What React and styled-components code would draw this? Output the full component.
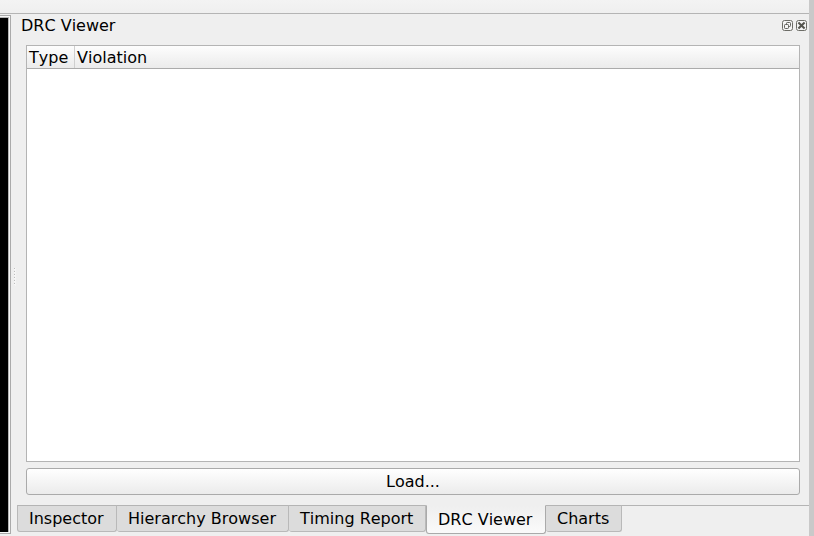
import React from "react";
import styled, { createGlobalStyle } from "styled-components";

const GlobalStyle = createGlobalStyle`
  * { box-sizing: border-box; }
  body { margin: 0; background: #efefef; overflow: hidden; }
`;

const Window = styled.div`
  display: grid;
  grid-template-columns: 809px 5px;
  width: 814px;
  height: 536px;
  background: #efefef;
  color: #000;
  font: 16px/20px "DejaVu Sans", sans-serif;
  font-kerning: none;
  white-space: nowrap;
`;

const Main = styled.div`
  display: flex;
  flex-direction: column;
  min-width: 0;
`;

const WindowEdge = styled.div`
  background: #c9c9c9;
`;

const Toolbar = styled.div`
  flex: none;
  height: 14px;
  background: linear-gradient(#f3f3f3, #efefef);
  border-bottom: 1px solid #b4b4b4;
`;

const Workspace = styled.div`
  display: flex;
  flex: 1;
  min-height: 0;
`;

const CanvasFrame = styled.div`
  flex: none;
  width: 11px;
  height: 519px;
  margin-top: 1px;
  padding: 1px 1px 1px 0;
  background: #f7f7f7;
  border: 1px solid #aaaaaa;
  border-left: 0;
`;

const Canvas = styled.div`
  height: 100%;
  background: #000;
  border: 1px solid #b4b4b4;
  border-width: 1px 1px 0 0;
`;

const Splitter = styled.div`
  flex: none;
  width: 6px;
  padding: 254px 0 0 3px;
`;

const Grip = styled.div`
  width: 2px;
  height: 18px;
  background: repeating-linear-gradient(#bdbdbd 0 1px, #f8f8f8 1px 2px, #efefef 2px 3px);
  border-right: 1px solid #f5f5f5;
`;

const Dock = styled.div`
  display: flex;
  flex-direction: column;
  flex: 1;
  min-width: 0;
`;

const TitleBar = styled.div`
  display: flex;
  align-items: center;
  height: 23px;
  padding: 0 2px 0 4px;
`;

const Title = styled.div`
  flex: 1;
`;

const TitleButtons = styled.div`
  display: flex;
  gap: 3px;
`;

const TitleIcon = styled.svg`
  display: block;
  width: 11px;
  height: 11px;
`;

const Table = styled.div`
  height: 417px;
  margin: 8px 9px 0;
  background: #fff;
  border: 1px solid #b4b4b4;
`;

const HeaderRow = styled.div`
  display: flex;
  height: 23px;
  background: linear-gradient(#fdfdfd, #ebebeb);
  border-bottom: 1px solid #ababab;
`;

const HeaderCell = styled.div`
  width: ${({ $width }) => $width || "auto"};
  padding: 2px 2px 0;
  border-right: ${({ $divided }) => ($divided ? "1px solid #cfcfcf" : "0")};
`;

const LoadButton = styled.button`
  height: 27px;
  margin: 6px 9px 0;
  padding: 0;
  color: inherit;
  font: inherit;
  font-kerning: none;
  background: linear-gradient(#ffffff, #ebebeb);
  border: 1px solid #aaaaaa;
  border-radius: 3px;
`;

const TabBar = styled.div`
  display: flex;
  align-items: flex-start;
  height: 31px;
  margin-top: 10px;
  background: linear-gradient(#b4b4b4, #b4b4b4) 0 0 / 100% 1px no-repeat;
`;

const Tab = styled.div`
  width: ${({ $width }) => $width}px;
  height: ${({ $selected }) => ($selected ? 29 : 27)}px;
  padding: ${({ $selected }) => ($selected ? 4 : 3)}px 0 0 11px;
  background: ${({ $selected }) =>
    $selected ? "linear-gradient(#efefef, #fafafa)" : "#dcdcdc"};
  border: 1px solid ${({ $selected }) => ($selected ? "#aaaaaa" : "#b9b9b9")};
  border-top-color: ${({ $selected }) => ($selected ? "#efefef" : "#b4b4b4")};
  border-left-width: ${({ $joined }) => ($joined ? 0 : 1)}px;
  border-radius: 0 0 3px 3px;
`;

const tabs = [
  { label: "Inspector", width: 100 },
  { label: "Hierarchy Browser", width: 172, joined: true },
  { label: "Timing Report", width: 137, joined: true },
  { label: "DRC Viewer", width: 120, selected: true },
  { label: "Charts", width: 76, joined: true },
];

const iconFrame = (
  <rect x=".5" y=".5" width="10" height="10" rx="2" fill="#f5f5f5" stroke="#6c6c66" />
);

export default function App() {
  return (
    <>
      <GlobalStyle />
      <Window>
        <Main>
          <Toolbar />
          <Workspace>
            <CanvasFrame>
              <Canvas />
            </CanvasFrame>
            <Splitter>
              <Grip />
            </Splitter>
            <Dock>
              <TitleBar>
                <Title>DRC Viewer</Title>
                <TitleButtons>
                  <TitleIcon viewBox="0 0 11 11" aria-label="Float">
                    {iconFrame}
                    <rect x="4.5" y="2.5" width="4" height="4" rx=".8" fill="none" stroke="#62625c" />
                    <rect x="2.5" y="4.5" width="4" height="4" rx=".8" fill="#f5f5f5" stroke="#62625c" />
                  </TitleIcon>
                  <TitleIcon viewBox="0 0 11 11" aria-label="Close">
                    {iconFrame}
                    <path d="M2.4 2.4 8.6 8.6M8.6 2.4 2.4 8.6" stroke="#55554f" strokeWidth="2.1" />
                  </TitleIcon>
                </TitleButtons>
              </TitleBar>
              <Table>
                <HeaderRow>
                  <HeaderCell $width="48px" $divided>Type</HeaderCell>
                  <HeaderCell>Violation</HeaderCell>
                </HeaderRow>
              </Table>
              <LoadButton>Load...</LoadButton>
              <TabBar>
                {tabs.map((tab) => (
                  <Tab
                    key={tab.label}
                    $width={tab.width}
                    $selected={tab.selected}
                    $joined={tab.joined}
                  >
                    {tab.label}
                  </Tab>
                ))}
              </TabBar>
            </Dock>
          </Workspace>
        </Main>
        <WindowEdge />
      </Window>
    </>
  );
}
